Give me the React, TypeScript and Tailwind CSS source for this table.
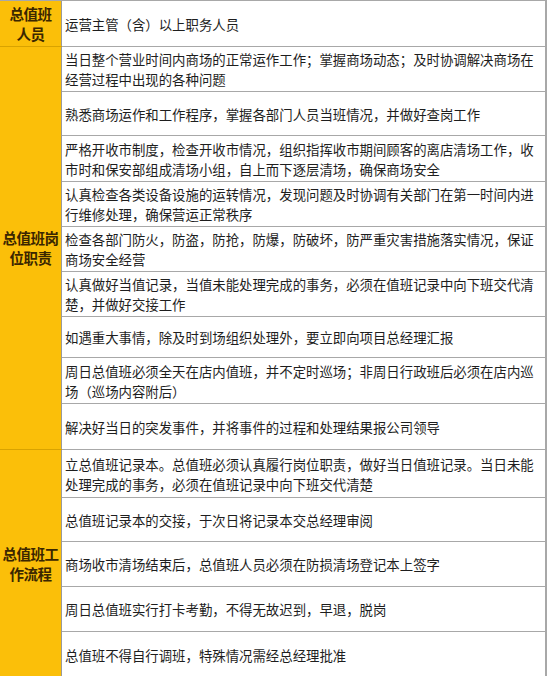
const groups: { label: string[]; rows: { text: string; h: string }[] }[] = [
  {
    label: ["总值班", "人员"],
    rows: [{ text: "运营主管（含）以上职务人员", h: "h-[45px]" }],
  },
  {
    label: ["总值班岗", "位职责"],
    rows: [
      {
        text: "当日整个营业时间内商场的正常运作工作；掌握商场动态；及时协调解决商场在经营过程中出现的各种问题",
        h: "h-[45px]",
      },
      { text: "熟悉商场运作和工作程序，掌握各部门人员当班情况，并做好查岗工作", h: "h-[44px]" },
      {
        text: "严格开收市制度，检查开收市情况，组织指挥收市期间顾客的离店清场工作，收市时和保安部组成清场小组，自上而下逐层清场，确保商场安全",
        h: "h-[46px]",
      },
      {
        text: "认真检查各类设备设施的运转情况，发现问题及时协调有关部门在第一时间内进行维修处理，确保营运正常秩序",
        h: "h-[45px]",
      },
      {
        text: "检查各部门防火，防盗，防抢，防爆，防破坏，防严重灾害措施落实情况，保证商场安全经营",
        h: "h-[45px]",
      },
      {
        text: "认真做好当值记录，当值未能处理完成的事务，必须在值班记录中向下班交代清楚，并做好交接工作",
        h: "h-[45px]",
      },
      { text: "如遇重大事情，除及时到场组织处理外，要立即向项目总经理汇报", h: "h-[41px]" },
      {
        text: "周日总值班必须全天在店内值班，并不定时巡场；非周日行政班后必须在店内巡场（巡场内容附后）",
        h: "h-[46px]",
      },
      { text: "解决好当日的突发事件，并将事件的过程和处理结果报公司领导", h: "h-[46px]" },
    ],
  },
  {
    label: ["总值班工", "作流程"],
    rows: [
      {
        text: "立总值班记录本。总值班必须认真履行岗位职责，做好当日值班记录。当日未能处理完成的事务，必须在值班记录中向下班交代清楚",
        h: "h-[48px]",
      },
      { text: "总值班记录本的交接，于次日将记录本交总经理审阅", h: "h-[44px]" },
      { text: "商场收市清场结束后，总值班人员必须在防损清场登记本上签字", h: "h-[45px]" },
      { text: "周日总值班实行打卡考勤，不得无故迟到，早退，脱岗", h: "h-[45px]" },
      { text: "总值班不得自行调班，特殊情况需经总经理批准", h: "h-[46px]" },
    ],
  },
];

export default function App() {
  return (
    <div className="w-[550px] h-[676px] bg-white overflow-hidden font-['Noto_Sans_CJK_SC','Noto_Sans',sans-serif]">
      <div className="w-[547px] border-t border-r-2 border-[#a8a8a8]">
        {groups.map((g, gi) => (
          <div key={gi} className={`flex ${gi > 0 ? "border-t border-[#d9a300]" : ""}`}>
            <div className="w-[62px] shrink-0 bg-[#fbbf09] border-r border-[#9a9a9a] flex flex-col items-center justify-center">
              {g.label.map((l) => (
                <div key={l} className="text-[14.5px] leading-[20px] font-bold text-[#3a2600] tracking-[-0.5px]">
                  {l}
                </div>
              ))}
            </div>
            <div className="flex-1 flex flex-col">
              {g.rows.map((r, ri) => (
                <div
                  key={ri}
                  className={`${r.h} flex items-center px-[3px] text-[13.4px] leading-[20px] text-[#1e1e1e] ${
                    ri > 0 ? "border-t border-[#a8a8a8]" : gi > 0 ? "border-t border-[#a8a8a8] -mt-px" : ""
                  }`}
                >
                  <span>{r.text}</span>
                </div>
              ))}
            </div>
          </div>
        ))}
      </div>
    </div>
  );
}
